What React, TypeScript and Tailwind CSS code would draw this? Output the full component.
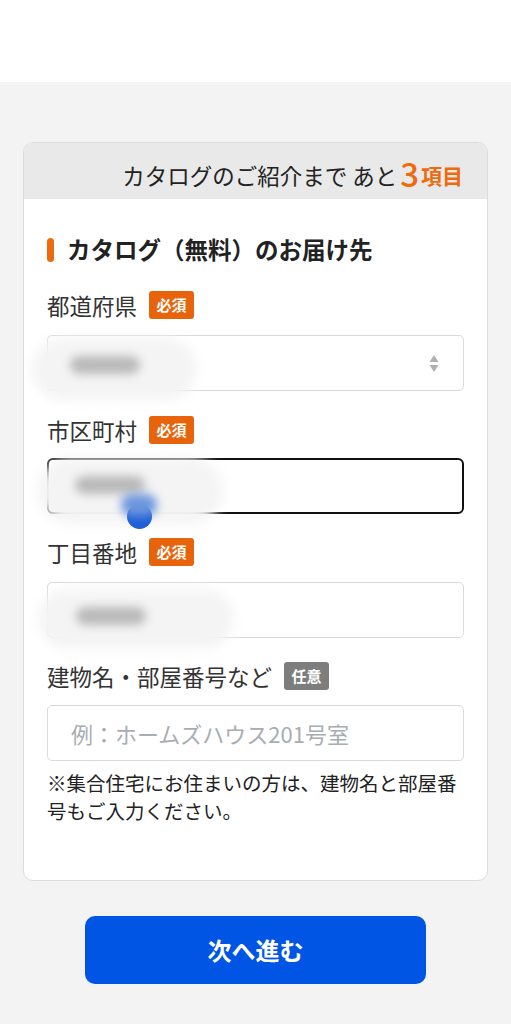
const font = { fontFamily: '"Noto Sans CJK JP", "Noto Sans", sans-serif' };

function Badge({ label, optional }: { label: string; optional?: boolean }) {
  return (
    <span
      className={`ml-[12px] inline-flex h-[28px] w-[45px] items-center justify-center rounded-[3px] text-[15px] font-bold text-white ${
        optional ? 'bg-[#7d7d7d]' : 'bg-[#e8640c]'
      }`}
    >
      {label}
    </span>
  );
}

function Label({ text, optional }: { text: string; optional?: boolean }) {
  return (
    <div className="flex h-[28px] items-center">
      <span className="text-[22.5px] leading-none text-[#333]">{text}</span>
      <Badge label={optional ? '任意' : '必須'} optional={optional} />
    </div>
  );
}

function Blur({ className }: { className: string }) {
  return (
    <div className={`pointer-events-none absolute ${className}`}>
      <div className="absolute inset-0 rounded-full bg-[#f4f4f4] blur-[6px]" />
      <div className="absolute left-[38px] top-[18px] h-[18px] w-[70px] rounded-full bg-[#b9b9b9] blur-[5px]" />
    </div>
  );
}

export default function App() {
  return (
    <div style={font} className="min-h-[1024px] w-[511px] bg-[#f3f3f3]">
      <div className="h-[82px] bg-white" />
      <div className="px-[23px] pt-[60px]">
        <div className="overflow-hidden rounded-[10px] border border-[#dcdcdc] bg-white">
          <div className="flex h-[56px] items-end justify-end border-b border-[#e6e6e6] bg-[#e9e9e9] pb-[12px] pr-[24px]">
            <span className="text-[22.5px] leading-none text-[#222]">カタログのご紹介まで あと</span>
            <span className="ml-[3px] text-[33px] font-medium leading-[26px] text-[#ee6a0e]">3</span>
            <span className="ml-[2px] text-[21px] font-bold leading-none text-[#ee6a0e]">項目</span>
          </div>
          <div className="px-[23px] pb-[55px] pt-[35px]">
            <div className="flex h-[32px] items-center">
              <span className="h-[24px] w-[7px] rounded-full bg-[#ee6a0e]" />
              <span className="ml-[13px] text-[23.5px] font-bold leading-none text-[#222]">
                カタログ（無料）のお届け先
              </span>
            </div>

            <div className="mt-[25px]">
              <Label text="都道府県" />
              <div className="relative mt-[16px] flex h-[56px] items-center justify-end rounded-[5px] border border-[#dadada] pr-[24px]">
                <svg width="10" height="19" viewBox="0 0 10 19">
                  <path d="M5 1 L9.5 8 L0.5 8 Z" fill="#b0b0b0" />
                  <path d="M5 18 L9.5 11 L0.5 11 Z" fill="#b0b0b0" />
                </svg>
                <Blur className="left-[-16px] top-[2px] h-[62px] w-[165px]" />
              </div>
            </div>

            <div className="mt-[25px]">
              <Label text="市区町村" />
              <div className="relative mt-[14px] h-[56px] rounded-[6px] border-2 border-[#111]">
                <Blur className="left-[-12px] top-[-2px] h-[66px] w-[186px]" />
                <div className="absolute left-[78px] top-[44px] h-[25px] w-[25px] rounded-full bg-[#1e5fd8]" />
                <div className="absolute left-[72px] top-[34px] h-[22px] w-[36px] rounded-full bg-[#6d95dd] blur-[5px]" />
              </div>
            </div>

            <div className="mt-[24px]">
              <Label text="丁目番地" />
              <div className="relative mt-[16px] h-[56px] rounded-[5px] border border-[#dadada]">
                <Blur className="left-[-10px] top-[6px] h-[60px] w-[196px]" />
              </div>
            </div>

            <div className="mt-[24px]">
              <Label text="建物名・部屋番号など" optional />
              <div className="mt-[15px] flex h-[56px] items-center rounded-[5px] border border-[#dadada] pl-[23px]">
                <span className="text-[22px] leading-none text-[#a8adb3]">例：ホームズハウス201号室</span>
              </div>
            </div>

            <p className="mt-[8px] text-[19.5px] leading-[28px] text-[#222]">
              ※集合住宅にお住まいの方は、建物名と部屋番号もご入力ください。
            </p>
          </div>
        </div>
      </div>

      <div className="flex justify-center pt-[35px]">
        <button className="h-[68px] w-[341px] rounded-[10px] bg-[#0055e5] text-[24px] font-bold text-white">
          次へ進む
        </button>
      </div>
    </div>
  );
}
